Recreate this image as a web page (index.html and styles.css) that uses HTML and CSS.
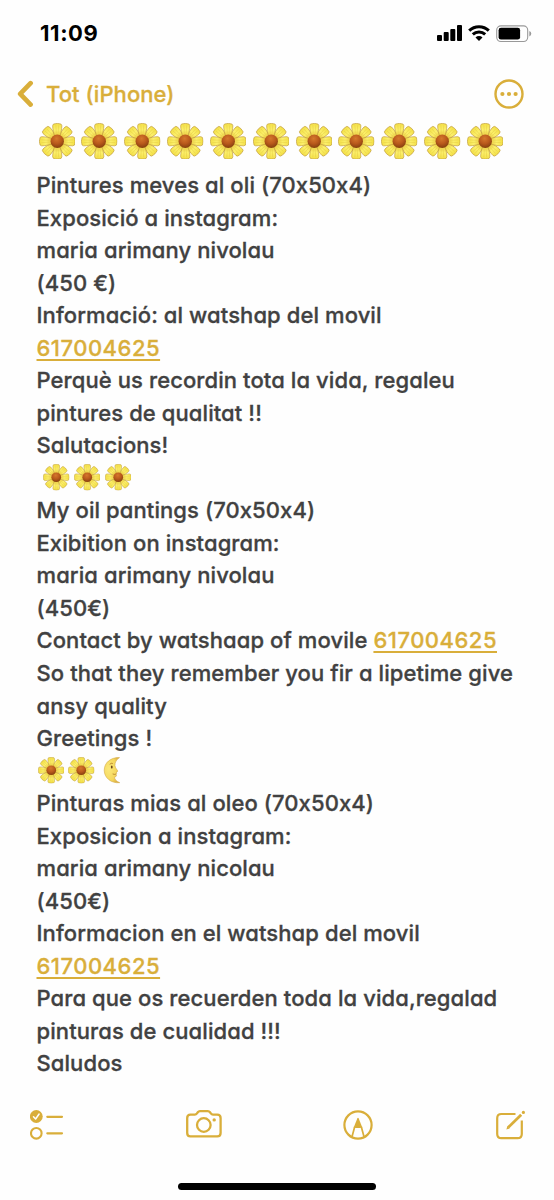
FILE: index.html
```
<!DOCTYPE html>
<html lang="ca">
<head>
<meta charset="utf-8">
<meta name="viewport" content="width=device-width">
<title>Tot (iPhone)</title>
<link rel="stylesheet" href="styles.css">
</head>
<body>
<svg class="defs" aria-hidden="true">
  <defs>
    <linearGradient id="petal" x1="0" y1="0" x2="0" y2="1"><stop offset="0" stop-color="#f3df45"/><stop offset=".5" stop-color="#fcf06c"/><stop offset="1" stop-color="#e6c33c"/></linearGradient>
    <radialGradient id="core" cx=".45" cy=".3" r=".7"><stop offset="0" stop-color="#d5782c"/><stop offset=".55" stop-color="#b9591c"/><stop offset="1" stop-color="#85400f"/></radialGradient>
    <radialGradient id="moonfill" cx=".3" cy=".45" r=".75"><stop offset="0" stop-color="#fbe879"/><stop offset=".65" stop-color="#f5d75c"/><stop offset="1" stop-color="#d9a83b"/></radialGradient>
    <g id="leaf"><path d="M-2.5-4.5C-3.6-8-4.6-12-4.6-15.6Q-4.4-17.8-2-17.6Q0-18.2 2-17.6Q4.4-17.8 4.6-15.6C4.6-12 3.6-8 2.5-4.5Z" fill="url(#petal)" stroke="#c29e3c" stroke-width=".7"/><path d="M-1.4-16L-.9-8M1.4-16L.9-8" fill="none" stroke="#e5cd45" stroke-width=".5"/></g>
    <symbol id="flower" viewBox="-18.3 -18.3 36.6 36.6">
      <use href="#leaf" transform="rotate(45)"/><use href="#leaf" transform="rotate(135)"/><use href="#leaf" transform="rotate(225)"/><use href="#leaf" transform="rotate(315)"/>
      <use href="#leaf"/><use href="#leaf" transform="rotate(90)"/><use href="#leaf" transform="rotate(180)"/><use href="#leaf" transform="rotate(270)"/>
      <circle r="6.7" fill="url(#core)"/>
    </symbol>
  </defs>
</svg>
<div class="screen">
  <header class="status">
    <span class="time">11:09</span>
    <div class="indicators">
      <svg class="signal" viewBox="0 0 26 16"><rect x="0" y="10" width="5" height="6" rx="1"/><rect x="6.7" y="7" width="5" height="9" rx="1"/><rect x="13.3" y="4" width="5" height="12" rx="1"/><rect x="20" y="0" width="5" height="16" rx="1"/></svg>
      <svg class="wifi" viewBox="0 0 22 16"><g fill="none" stroke="#000" stroke-width="3"><path d="M1.2 5.6a14.1 14.1 0 0 1 19.6 0"/><path d="M4.8 9.4a9 9 0 0 1 12.4 0"/></g><path d="M7.5 12.4a5.1 5.1 0 0 1 7 0L11 16z"/></svg>
      <svg class="battery" viewBox="0 0 36 18"><rect x=".7" y=".9" width="31" height="15.6" rx="4.2" fill="none" stroke="#999" stroke-width="1.1"/><rect x="2.6" y="2.8" width="21.5" height="11.8" rx="2.4"/><path d="M33.3 6q2 .8 2 2.7t-2 2.7z" fill="#999"/></svg>
    </div>
  </header>
  <nav class="navbar">
    <svg class="chevron" viewBox="0 0 18 28"><path d="M14.6 3.2L4.2 13.9L14.6 24.6" fill="none" stroke="currentColor" stroke-width="4.7" stroke-linecap="round" stroke-linejoin="round"/></svg>
    <span class="back">Tot (iPhone)</span>
    <svg class="more" viewBox="0 0 30 30"><circle cx="15" cy="15" r="13.5" fill="none" stroke="currentColor" stroke-width="2.4"/><g fill="currentColor"><circle cx="8.4" cy="15" r="2.1"/><circle cx="15" cy="15" r="2.1"/><circle cx="21.6" cy="15" r="2.1"/></g></svg>
  </nav>
  <main class="note">
    <div class="flowers large"><svg><use href="#flower"/></svg><svg><use href="#flower"/></svg><svg><use href="#flower"/></svg><svg><use href="#flower"/></svg><svg><use href="#flower"/></svg><svg><use href="#flower"/></svg><svg><use href="#flower"/></svg><svg><use href="#flower"/></svg><svg><use href="#flower"/></svg><svg><use href="#flower"/></svg><svg><use href="#flower"/></svg></div>
    <p>Pintures meves al oli (70x50x4)</p>
    <p>Exposició a instagram:</p>
    <p>maria arimany nivolau</p>
    <p>(450 €)</p>
    <p>Informació: al watshap del movil</p>
    <p><a>617004625</a></p>
    <p>Perquè us recordin tota la vida, regaleu</p>
    <p>pintures de qualitat !!</p>
    <p>Salutacions!</p>
    <div class="flowers small indent"><svg><use href="#flower"/></svg><svg><use href="#flower"/></svg><svg><use href="#flower"/></svg></div>
    <p>My oil pantings (70x50x4)</p>
    <p>Exibition on instagram:</p>
    <p>maria arimany nivolau</p>
    <p>(450€)</p>
    <p>Contact by watshaap of movile <a>617004625</a></p>
    <p>So that they remember you fir a lipetime give</p>
    <p>ansy quality</p>
    <p>Greetings !</p>
    <div class="flowers small"><svg><use href="#flower"/></svg><svg><use href="#flower"/></svg><svg class="moon" viewBox="0 0 26 26"><path d="M16.2.6C7.5.2 1.2 5.7 1.2 13S7.8 26 16.4 25.2C12.9 23.8 11.4 22 11.3 19.6Q13.4 19.5 13.2 17.8L12.8 16.7L13.7 15.8L13 14.9Q15 14.4 14.2 13.2Q12 10.6 11.7 8.5C11.5 5.4 13.2 2.5 16.2.6Z" fill="url(#moonfill)" stroke="#d4ad4b" stroke-width=".6"/><ellipse cx="8.6" cy="9.8" rx=".9" ry="1.5" fill="#68451e"/><path d="M6.6 7.2q1.5-1.6 3-.8M9.5 16.6q1.7.9 3.2.1" fill="none" stroke="#ae7a27" stroke-width=".8"/></svg></div>
    <p>Pinturas mias al oleo (70x50x4)</p>
    <p>Exposicion a instagram:</p>
    <p>maria arimany nicolau</p>
    <p>(450€)</p>
    <p>Informacion en el watshap del movil</p>
    <p><a>617004625</a></p>
    <p>Para que os recuerden toda la vida,regalad</p>
    <p>pinturas de cualidad !!!</p>
    <p>Saludos</p>
  </main>
  <footer class="toolbar">
    <svg class="checklist" viewBox="0 0 34 30"><circle cx="6.3" cy="6.5" r="6.4" fill="currentColor"/><path d="M3.5 6.8L5.6 9L9.1 4" fill="none" stroke="#fff" stroke-width="1.5" stroke-linecap="round" stroke-linejoin="round"/><circle cx="6.3" cy="23.3" r="5.3" fill="none" stroke="currentColor" stroke-width="2.1"/><path d="M17.3 6.8H32M17.3 23.3H32" stroke="currentColor" stroke-width="2.2" stroke-linecap="round"/></svg>
    <svg class="camera" viewBox="0 0 36 28"><g fill="none" stroke="currentColor" stroke-width="2.3"><path d="M4.5 4.6H8.8Q10.1 4.6 11 3.4L11.8 2.3Q12.6 1.2 14 1.2H21.8Q23.2 1.2 24 2.3L24.8 3.4Q25.7 4.6 27 4.6H31.2Q34.6 4.6 34.6 8V23Q34.6 26.4 31.2 26.4H4.5Q1.2 26.4 1.2 23V8Q1.2 4.6 4.5 4.6Z"/><circle cx="17.8" cy="15" r="6.8"/></g><circle cx="28.2" cy="9.9" r="1.7" fill="currentColor"/></svg>
    <svg class="markup" viewBox="0 0 30 30"><g fill="none" stroke="currentColor"><circle cx="15" cy="15" r="13.6" stroke-width="2.2"/><path d="M11.7 16.8L9 26.8M18.3 16.8L21 26.8" stroke-width="1.7"/></g><path d="M14.3 8.5Q15 7.2 15.7 8.5L19.3 17.4Q15 18.7 10.7 17.4Z" fill="currentColor"/></svg>
    <svg class="compose" viewBox="0 0 30 30"><g fill="none" stroke="currentColor"><path d="M19.5 4H5.4Q1.2 4 1.2 8.2V23.9Q1.2 28.1 5.4 28.1H21.6Q25.8 28.1 25.8 23.9V10.5" stroke-width="2.2"/><path d="M12.1 17.5L25.2 4.7" stroke-width="2.8"/></g><path d="M10.4 19.4L11.3 16.3L13.6 18.5Z" fill="currentColor"/><circle cx="27.4" cy="2.4" r="1.6" fill="currentColor"/></svg>
  </footer>
  <div class="home-indicator"></div>
</div>
</body>
</html>
```
FILE: styles.css
```
* { box-sizing: border-box; }
body { margin: 0; background: #fefefe; font-family: Inter, "Liberation Sans", sans-serif; }
.defs { position: absolute; width: 0; height: 0; }
svg { display: block; flex: none; }
.screen { display: flex; flex-direction: column; width: 554px; height: 1200px; overflow: hidden; background: #fefefe; }
.status { display: flex; justify-content: space-between; height: 66px; padding: 25px 22px 0 40px; }
.time { font-size: 22px; font-weight: 700; line-height: 17px; letter-spacing: .6px; color: #000; }
.indicators { display: flex; align-items: flex-start; }
.signal { width: 26px; height: 16px; margin-right: 5px; }
.wifi { width: 22px; height: 16px; margin-right: 6px; }
.battery { width: 36px; height: 18px; }
.navbar { display: flex; align-items: center; height: 55px; padding: 0 30px 0 16px; color: #d9ae3a; }
.chevron { width: 18px; height: 28px; }
.back { margin-left: 12px; font-size: 22px; font-weight: 500; letter-spacing: .08px; white-space: nowrap; -webkit-text-stroke: .3px; }
.more { width: 30px; height: 30px; margin-left: auto; }
.note { height: 958px; padding-left: 36.5px; color: #414141; font-size: 22px; font-weight: 500; letter-spacing: .09px; -webkit-text-stroke: .3px; font-feature-settings: "cv11", "calt" 0; }
.note p { height: 32.54px; margin: 0; line-height: 32.54px; white-space: nowrap; }
.note a { color: #d9ae3a; letter-spacing: .5px; text-decoration: underline; text-decoration-thickness: 2px; text-underline-offset: 3px; text-decoration-skip-ink: none; }
.flowers { display: flex; align-items: center; }
.large { height: 48px; padding: 0 0 8px 2px; gap: 6.35px; }
.large svg { width: 36.5px; height: 36.5px; }
.small { height: 32.54px; gap: 4.3px; padding: 0 0 1px 1px; }
.small svg { width: 26.5px; height: 26.5px; }
.indent { padding-left: 6.5px; }
.small .moon { margin-left: 4px; }
.toolbar { display: flex; align-items: flex-start; height: 103.5px; padding: 31px 28px 0 30px; color: #d9ae3a; }
.checklist { width: 34px; height: 30px; }
.camera { width: 36px; height: 28px; margin-left: 122px; }
.markup { width: 30px; height: 30px; margin-left: 120.5px; }
.compose { width: 30px; height: 30px; margin-left: auto; }
.home-indicator { width: 198px; height: 7px; margin: 0 auto; border-radius: 4px; background: #000; }
```
